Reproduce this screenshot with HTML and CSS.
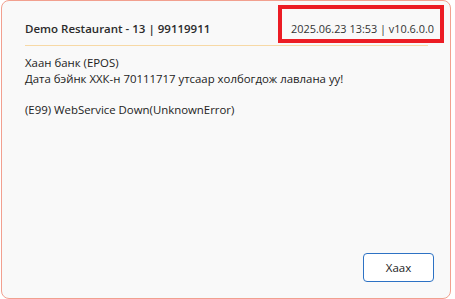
FILE: index.html
```html
<!DOCTYPE html>
<html>
<head>
<meta charset="utf-8">
<link rel="stylesheet" href="styles.css">
</head>
<body>
<div class="window">
  <div class="header">
    <div class="title">Demo Restaurant - 13 | 99119911</div>
    <div class="meta">2025.06.23 13:53 | v10.6.0.0</div>
  </div>
  <div class="sep"></div>
  <div class="content">
    <div>Хаан банк (EPOS)</div>
    <div>Дата бэйнк ХХК-н 70111717 утсаар холбогдож лавлана уу!</div>
    <div class="blank"></div>
    <div>(E99) WebService Down(UnknownError)</div>
  </div>
  <div class="footer">
    <button class="btn">Хаах</button>
  </div>
  <div class="highlight"></div>
</div>
</body>
</html>
```

FILE: styles.css
```css
html, body {
  margin: 0;
  padding: 0;
  background: #ffffff;
}
body {
  width: 455px;
  height: 299px;
  overflow: hidden;
  font-family: "Open Sans", "Noto Sans", sans-serif;
  color: #222222;
}
.window {
  position: relative;
  box-sizing: border-box;
  margin-left: 1px;
  width: 450px;
  height: 299px;
  background: #f9f9f9;
  border: 1px solid #f2a08f;
  border-radius: 8px;
  display: flex;
  flex-direction: column;
}
.header {
  display: flex;
  justify-content: space-between;
  align-items: baseline;
  padding: 20px 16px 0 23px;
  height: 24px;
  font-size: 11.5px;
  line-height: 16px;
}
.title {
  font-weight: 600;
  color: #2b2b2b;
}
.meta {
  font-size: 10.9px;
  color: #333333;
}
.sep {
  height: 1px;
  background: #f7d9a6;
  margin: 0 22px 0 23px;
}
.content {
  padding: 9px 24px 0 23px;
  font-size: 11.4px;
  line-height: 15.6px;
  flex: 1;
}
.blank {
  height: 15.6px;
}
.footer {
  display: flex;
  justify-content: flex-end;
  padding: 0 16px 16px 0;
}
.btn {
  box-sizing: border-box;
  width: 71px;
  height: 29px;
  background: #ffffff;
  border: 1px solid #2d72c4;
  border-radius: 4px;
  font-family: "Open Sans", "Noto Sans", sans-serif;
  font-size: 11.5px;
  color: #222222;
  padding: 0;
}
.highlight {
  position: absolute;
  left: 276px;
  top: 4px;
  width: 166px;
  height: 38px;
  box-sizing: border-box;
  border: 4px solid #ec1c24;
}
```
